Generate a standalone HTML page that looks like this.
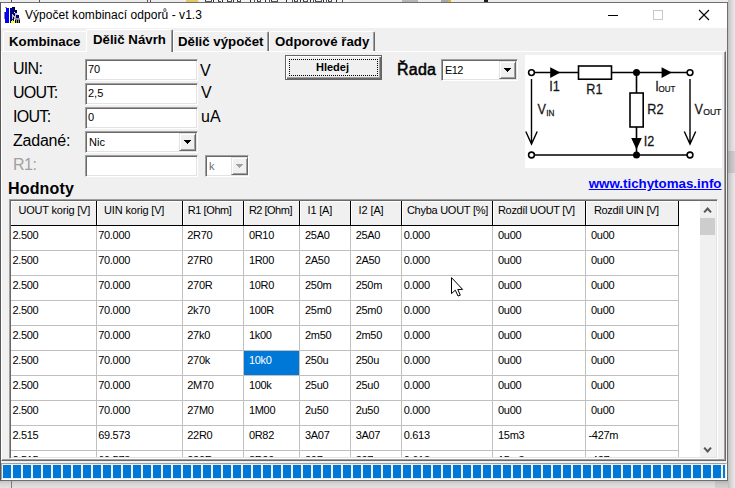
<!DOCTYPE html>
<html>
<head>
<meta charset="utf-8">
<style>
*{box-sizing:border-box;margin:0;padding:0}
html,body{width:735px;height:488px;overflow:hidden;background:#f0f0f0;font-family:"Liberation Sans",sans-serif;color:#000}
.a{position:absolute}
.t{position:absolute;white-space:nowrap}
#bgtop{left:0;top:0;width:735px;height:2px;background:#ececec}
#bgright{left:728px;top:0;width:7px;height:488px;background:linear-gradient(to right,#bdbdbd,#d6d6d6 45%,#e8e8e8)}
#bgbottom{left:0;top:481px;width:735px;height:7px;background:linear-gradient(to bottom,#c4c4c4,#d6d6d6 40%,#e2e2e2)}
#win{left:0;top:2px;width:728px;height:479px;background:#f0f0f0;border:1px solid #6e6e6e;border-left-color:#585858}
#title{left:1px;top:3px;width:726px;height:25px;background:#fff}
#ttext{left:25px;top:8px;font-size:12px;line-height:15px;letter-spacing:0.05px}
.tabtxt{font-weight:bold;font-size:13.25px;line-height:15px}
.lbl{font-size:16px;line-height:18px}
.inp{position:absolute;height:22px;background:#fff;border:1px solid;border-color:#a0a0a0 #fff #fff #a0a0a0;box-shadow:inset 1px 1px 0 #696969, inset -1px -1px 0 #e3e3e3}
.it{font-size:11px;line-height:13px}
.cbtn{position:absolute;width:17px;height:18px;background:#f0f0f0;border:1px solid;border-color:#e3e3e3 #696969 #696969 #e3e3e3;box-shadow:inset 1px 1px 0 #fff, inset -1px -1px 0 #a0a0a0}
.cbtn:after{content:"";position:absolute;left:4px;top:6px;width:7px;height:4px;background:linear-gradient(#000,#000) 0 0/7px 1px no-repeat,linear-gradient(#000,#000) 1px 1px/5px 1px no-repeat,linear-gradient(#000,#000) 2px 2px/3px 1px no-repeat,linear-gradient(#000,#000) 3px 3px/1px 1px no-repeat}
.cbtn.dis:after{background:linear-gradient(#a0a0a0,#a0a0a0) 0 0/7px 1px no-repeat,linear-gradient(#a0a0a0,#a0a0a0) 1px 1px/5px 1px no-repeat,linear-gradient(#a0a0a0,#a0a0a0) 2px 2px/3px 1px no-repeat,linear-gradient(#a0a0a0,#a0a0a0) 3px 3px/1px 1px no-repeat}
.hc{position:absolute;top:201px;height:25px;background:#f0f0f0;border-right:1px solid #000;border-bottom:1px solid #000;box-shadow:inset 1px 1px 0 #fff}
.ht{font-size:11px;line-height:13px;top:206px}
.ct{font-size:11px;line-height:13px}
.vl{position:absolute;width:1px;background:#c0c0c0}
.hl{position:absolute;height:1px;background:#c0c0c0}
</style>
</head>
<body>
<div class="a" id="bgtop"></div><div class="a" style="left:200px;top:0px;width:150px;height:2px;background:#f4f4f4"></div><div class="a" style="left:11px;top:0px;width:1px;height:2px;background:#505458"></div><div class="a" style="left:39px;top:0px;width:1px;height:2px;background:#505458"></div><div class="a" style="left:147px;top:0px;width:1px;height:2px;background:#505458"></div><div class="a" style="left:150px;top:0px;width:1px;height:2px;background:#505458"></div><div class="a" style="left:186px;top:0px;width:12px;height:2px;background:#e6c766"></div><div class="a" style="left:205px;top:0px;width:1px;height:2px;background:#2c2c3a"></div><div class="a" style="left:211px;top:0px;width:1px;height:2px;background:#4c4c5c"></div><div class="a" style="left:205px;top:1px;width:7px;height:1px;background:#55555f"></div><div class="a" style="left:213px;top:0px;width:1px;height:2px;background:#2c2c3a"></div><div class="a" style="left:218px;top:0px;width:1px;height:2px;background:#2c2c3a"></div><div class="a" style="left:218px;top:1px;width:3px;height:1px;background:#55555f"></div><div class="a" style="left:222px;top:0px;width:1px;height:2px;background:#2c2c3a"></div><div class="a" style="left:227px;top:0px;width:1px;height:2px;background:#2c2c3a"></div><div class="a" style="left:231px;top:0px;width:1px;height:2px;background:#4c4c5c"></div><div class="a" style="left:227px;top:1px;width:5px;height:1px;background:#55555f"></div><div class="a" style="left:233px;top:0px;width:1px;height:2px;background:#2c2c3a"></div><div class="a" style="left:237px;top:0px;width:1px;height:2px;background:#2c2c3a"></div><div class="a" style="left:240px;top:0px;width:1px;height:2px;background:#4c4c5c"></div><div class="a" style="left:237px;top:1px;width:4px;height:1px;background:#55555f"></div><div class="a" style="left:250px;top:0px;width:1px;height:2px;background:#2c2c3a"></div><div class="a" style="left:254px;top:0px;width:1px;height:2px;background:#4c4c5c"></div><div class="a" style="left:257px;top:0px;width:1px;height:2px;background:#2c2c3a"></div><div class="a" style="left:260px;top:0px;width:1px;height:2px;background:#4c4c5c"></div><div class="a" style="left:257px;top:1px;width:4px;height:1px;background:#55555f"></div><div class="a" style="left:265px;top:0px;width:1px;height:2px;background:#2c2c3a"></div><div class="a" style="left:269px;top:0px;width:1px;height:2px;background:#4c4c5c"></div><div class="a" style="left:271px;top:0px;width:1px;height:2px;background:#2c2c3a"></div><div class="a" style="left:277px;top:0px;width:1px;height:2px;background:#4c4c5c"></div><div class="a" style="left:271px;top:1px;width:7px;height:1px;background:#55555f"></div><div class="a" style="left:286px;top:0px;width:1px;height:2px;background:#2c2c3a"></div><div class="a" style="left:292px;top:0px;width:1px;height:2px;background:#4c4c5c"></div><div class="a" style="left:294px;top:0px;width:1px;height:2px;background:#2c2c3a"></div><div class="a" style="left:297px;top:0px;width:1px;height:2px;background:#4c4c5c"></div><div class="a" style="left:294px;top:1px;width:4px;height:1px;background:#55555f"></div><div class="a" style="left:300px;top:0px;width:1px;height:2px;background:#2c2c3a"></div><div class="a" style="left:303px;top:0px;width:1px;height:2px;background:#2c2c3a"></div><div class="a" style="left:307px;top:0px;width:1px;height:2px;background:#4c4c5c"></div><div class="a" style="left:303px;top:1px;width:5px;height:1px;background:#55555f"></div><div class="a" style="left:310px;top:0px;width:1px;height:2px;background:#2c2c3a"></div><div class="a" style="left:313px;top:0px;width:1px;height:2px;background:#4c4c5c"></div><div class="a" style="left:315px;top:0px;width:1px;height:2px;background:#2c2c3a"></div><div class="a" style="left:321px;top:0px;width:1px;height:2px;background:#4c4c5c"></div><div class="a" style="left:315px;top:1px;width:7px;height:1px;background:#55555f"></div><div class="a" style="left:323px;top:0px;width:1px;height:2px;background:#2c2c3a"></div><div class="a" style="left:326px;top:0px;width:1px;height:2px;background:#4c4c5c"></div><div class="a" style="left:328px;top:0px;width:1px;height:2px;background:#2c2c3a"></div><div class="a" style="left:331px;top:0px;width:1px;height:2px;background:#4c4c5c"></div><div class="a" style="left:328px;top:1px;width:4px;height:1px;background:#55555f"></div><div class="a" style="left:336px;top:0px;width:1px;height:2px;background:#2c2c3a"></div><div class="a" style="left:342px;top:0px;width:1px;height:2px;background:#4c4c5c"></div><div class="a" style="left:402px;top:0px;width:16px;height:2px;background:#b6b6b6"></div><div class="a" style="left:441px;top:0px;width:7px;height:2px;background:#a8a8a8"></div><div class="a" style="left:448px;top:0px;width:3px;height:2px;background:#e0b040"></div><div class="a" style="left:484px;top:0px;width:4px;height:2px;background:#181828"></div>
<div class="a" id="bgbottom"></div><div class="a" style="left:11px;top:481px;width:1px;height:7px;background:#7c7c7c"></div><div class="a" style="left:715px;top:481px;width:20px;height:7px;background:linear-gradient(to bottom,#b4b4b4,#c8c8c8 50%,#d0d0d0)"></div>
<div class="a" id="bgright"></div><div class="a" style="left:728px;top:151px;width:7px;height:22px;background:rgba(0,0,0,0.1)"></div>
<div class="a" id="win"></div>
<div class="a" id="title"></div>
<svg class="a" style="left:3px;top:5px" width="20" height="20" viewBox="3 5 20 20" shape-rendering="crispEdges"><rect x="6" y="8" width="3" height="4" fill="#0000ff"/><rect x="5" y="12" width="4" height="11" fill="#0000ff"/><rect x="4" y="12" width="1" height="7" fill="#808080"/><rect x="5" y="7" width="2" height="1" fill="#909090"/><rect x="10" y="8" width="4" height="15" fill="#000080"/><rect x="14" y="10" width="3" height="9" fill="#000080"/><rect x="17" y="15" width="2" height="3" fill="#000080"/><rect x="12" y="7" width="3" height="1" fill="#000"/><rect x="14" y="8" width="1" height="2" fill="#000"/><rect x="15" y="10" width="2" height="1" fill="#000"/><rect x="14" y="12" width="1" height="1" fill="#fff"/><rect x="12" y="14" width="1" height="5" fill="#c0c0c0"/><rect x="13" y="15" width="1" height="2" fill="#c0c0c0"/><rect x="14" y="16" width="1" height="2" fill="#c0c0c0"/><rect x="15" y="13" width="1" height="6" fill="#c0c0c0"/><rect x="16" y="13" width="1" height="2" fill="#d0d0d0"/><rect x="17" y="14" width="1" height="1" fill="#d0d0d0"/><rect x="14" y="18" width="6" height="1" fill="#a0a0a0"/><rect x="15" y="19" width="5" height="4" fill="#909090"/><rect x="15" y="19" width="1" height="4" fill="#000"/><rect x="17" y="19" width="1" height="4" fill="#000"/><rect x="19" y="19" width="1" height="4" fill="#000"/><rect x="15" y="19" width="5" height="1" fill="#808080"/><rect x="11" y="21" width="4" height="2" fill="#ffff00"/><rect x="12" y="20" width="1" height="1" fill="#ffff00"/></svg>
<div class="t" id="ttext">Výpočet kombinací odporů - v1.3</div>
<svg class="a" style="left:600px;top:3px" width="127" height="25" viewBox="0 0 127 25">
<rect x="8" y="12" width="10" height="1" fill="#000" shape-rendering="crispEdges"/>
<rect x="53.5" y="7.5" width="9" height="9" fill="none" stroke="#c8c8c8" stroke-width="1"/>
<path d="M99 7 L109 17 M109 7 L99 17" stroke="#000" stroke-width="1.1" fill="none"/>
</svg>
<div class="a" style="left:1px;top:51px;width:725px;height:410px;border:1px solid;border-color:#fff #696969 #696969 #fff;box-shadow:inset -1px -1px 0 #a0a0a0"></div>
<div class="a" style="left:3px;top:31px;width:87px;height:20px;background:#f0f0f0;border:1px solid;border-color:#fff #696969 #f0f0f0 #fff;border-bottom:0;box-shadow:inset -1px 0 0 #a0a0a0;border-radius:2px 2px 0 0"></div>
<div class="a" style="left:173px;top:31px;width:96px;height:20px;background:#f0f0f0;border:1px solid;border-color:#fff #696969 #f0f0f0 #fff;border-bottom:0;box-shadow:inset -1px 0 0 #a0a0a0;border-radius:2px 2px 0 0"></div>
<div class="a" style="left:269px;top:31px;width:106px;height:20px;background:#f0f0f0;border:1px solid;border-color:#fff #696969 #f0f0f0 #fff;border-bottom:0;box-shadow:inset -1px 0 0 #a0a0a0;border-radius:2px 2px 0 0"></div>
<div class="a" style="left:86px;top:29px;width:87px;height:23px;background:#f0f0f0;border:1px solid;border-color:#fff #696969 #f0f0f0 #fff;border-bottom:0;box-shadow:inset -1px 0 0 #a0a0a0;border-radius:2px 2px 0 0"></div>
<div class="t tabtxt" style="left:9px;top:34px">Kombinace</div>
<div class="t tabtxt" style="left:93px;top:32px">Dělič Návrh</div>
<div class="t tabtxt" style="left:178px;top:34px">Dělič výpočet</div>
<div class="t tabtxt" style="left:275px;top:34px">Odporové řady</div>
<div class="t lbl" style="left:13px;top:60px;color:#000;letter-spacing:-0.70px">UIN:</div>
<div class="t lbl" style="left:13px;top:84px;color:#000;letter-spacing:-0.70px">UOUT:</div>
<div class="t lbl" style="left:13px;top:108px;color:#000;letter-spacing:-0.70px">IOUT:</div>
<div class="t lbl" style="left:13px;top:132px;color:#000;letter-spacing:-0.23px">Zadané:</div>
<div class="t lbl" style="left:13px;top:156px;color:#a0a0a0;letter-spacing:-0.45px">R1:</div>
<div class="t lbl" style="left:200px;top:62px">V</div>
<div class="t lbl" style="left:201px;top:84px">V</div>
<div class="t lbl" style="left:201px;top:108px">uA</div>
<div class="inp" style="left:85px;top:59px;width:113px"></div><div class="t it" style="left:88px;top:63px">70</div>
<div class="inp" style="left:85px;top:83px;width:113px"></div><div class="t it" style="left:88px;top:87px">2,5</div>
<div class="inp" style="left:85px;top:107px;width:113px"></div><div class="t it" style="left:88px;top:111px">0</div>
<div class="inp" style="left:85px;top:131px;width:113px"></div><div class="t it" style="left:89px;top:136px">Nic</div><div class="cbtn" style="left:179px;top:133px"></div>
<div class="inp" style="left:85px;top:155px;width:113px"></div>
<div class="inp" style="left:205px;top:155px;width:44px"></div><div class="t it" style="left:209px;top:160px;color:#6d6d6d">k</div><div class="cbtn dis" style="left:231px;top:157px"></div>
<div class="a" style="left:285px;top:55px;width:97px;height:25px;background:#f0f0f0;border:1px solid #646464;box-shadow:inset 1px 1px 0 #fff,inset -1px -1px 0 #696969,inset -2px -2px 0 #a0a0a0"></div>
<div class="a" style="left:289px;top:59px;width:89px;height:17px;border:1px dotted #000"></div>
<div class="t" style="left:316px;top:61px;font-weight:bold;font-size:11px;line-height:13px">Hledej</div>
<div class="t lbl" style="left:397px;top:61px;letter-spacing:0.25px;-webkit-text-stroke:0.5px #000">Řada</div>
<div class="inp" style="left:441px;top:59px;width:77px"></div><div class="t it" style="left:445px;top:64px;letter-spacing:-0.6px">E12</div><div class="cbtn" style="left:499px;top:61px"></div>
<svg class="a" style="left:525px;top:55px" width="197" height="113" viewBox="525 55 197 113">
<rect x="525" y="55" width="197" height="113" fill="#fff"/>
<g stroke="#000" stroke-width="1.6" fill="none">
<path d="M534 72.5 H578.5 M611.5 72.5 H687.5 M534 155 H687.5 M636.5 72.5 V93 M636.5 127 V155"/>
<rect x="578.5" y="66" width="33" height="13.2" fill="#fff"/>
<rect x="630" y="93" width="13.2" height="34" fill="#fff"/>
<circle cx="531.5" cy="72.6" r="2.9" fill="#fff"/><circle cx="690" cy="72.6" r="2.9" fill="#fff"/>
<circle cx="531.5" cy="155" r="2.9" fill="#fff"/><circle cx="690" cy="155" r="2.9" fill="#fff"/>
<path d="M531.5 79 V143 M525.8 131.5 L531.5 144 L537.2 131.5" stroke-width="1.4"/>
<path d="M690 79 V143 M684.3 131.5 L690 144 L695.7 131.5" stroke-width="1.4"/>
</g>
<circle cx="636.5" cy="72.6" r="3.5" fill="#000"/><circle cx="636.5" cy="155" r="3.5" fill="#000"/>
<path d="M550.2 67.2 L560.4 72.6 L550.2 78 Z M661.6 67.2 L671.8 72.6 L661.6 78 Z M631.2 138 L641.8 138 L636.5 149.5 Z" fill="#000"/>
<g font-family="Liberation Sans, sans-serif" fill="#151515" stroke="#151515" stroke-width="0.25">
<text transform="translate(549.3 91.2) scale(0.92 1)" font-size="13.8">I1</text><text transform="translate(586.3 94.4) scale(0.92 1)" font-size="13.8">R1</text><text transform="translate(647.3 113.6) scale(0.92 1)" font-size="13.8">R2</text><text transform="translate(643.8 146.2) scale(0.92 1)" font-size="13.8">I2</text><text transform="translate(655.2 90.6) scale(0.92 1)" font-size="13.8">I</text><text transform="translate(658.6 92.2) scale(0.93 1)" font-size="8.6">OUT</text><text transform="translate(537.6 114.3) scale(0.92 1)" font-size="13.8">V</text><text transform="translate(546.2 116.2) scale(0.95 1)" font-size="8.6">IN</text><text transform="translate(694.4 113.5) scale(0.92 1)" font-size="13.8">V</text><text transform="translate(703.2 114.8) scale(0.98 1)" font-size="8.8">OUT</text>
</g>
</svg>
<div class="t" style="left:8px;top:180px;font-weight:bold;font-size:16px;line-height:18px;letter-spacing:0.15px">Hodnoty</div>
<div class="t" style="right:13.5px;top:176px;font-weight:bold;font-size:13.33px;line-height:15px;color:#0000ff;text-decoration:underline">www.tichytomas.info</div>
<div class="a" style="left:9px;top:199px;width:709px;height:260px;background:#fff;border:1px solid;border-color:#a0a0a0 #fff #fff #a0a0a0;box-shadow:inset 1px 1px 0 #696969,inset -1px -1px 0 #e3e3e3"></div>
<div class="a" id="gridclip" style="left:11px;top:201px;width:705px;height:256px;overflow:hidden">
<div class="hc" style="left:0px;top:0;width:86px"></div><div class="t ht" style="left:7.4px;top:3px;letter-spacing:-0.19px">UOUT korig [V]</div>
<div class="hc" style="left:86px;top:0;width:86px"></div><div class="t ht" style="left:93.1px;top:3px;letter-spacing:-0.17px">UIN korig [V]</div>
<div class="hc" style="left:172px;top:0;width:61px"></div><div class="t ht" style="left:176.8px;top:3px;letter-spacing:-0.43px">R1 [Ohm]</div>
<div class="hc" style="left:233px;top:0;width:56px"></div><div class="t ht" style="left:237.9px;top:3px;letter-spacing:-0.50px">R2 [Ohm]</div>
<div class="hc" style="left:289px;top:0;width:51px"></div><div class="t ht" style="left:296.5px;top:3px;letter-spacing:-0.18px">I1 [A]</div>
<div class="hc" style="left:340px;top:0;width:51px"></div><div class="t ht" style="left:347.6px;top:3px;letter-spacing:-0.12px">I2 [A]</div>
<div class="hc" style="left:391px;top:0;width:91px"></div><div class="t ht" style="left:395.9px;top:3px;letter-spacing:-0.26px">Chyba UOUT [%]</div>
<div class="hc" style="left:482px;top:0;width:93px"></div><div class="t ht" style="left:487.0px;top:3px;letter-spacing:-0.34px">Rozdíl UOUT [V]</div>
<div class="hc" style="left:575px;top:0;width:93px"></div><div class="t ht" style="left:583.0px;top:3px;letter-spacing:-0.35px">Rozdíl UIN [V]</div>
<div class="vl" style="left:85px;top:25px;height:240px"></div><div class="vl" style="left:171px;top:25px;height:240px"></div><div class="vl" style="left:232px;top:25px;height:240px"></div><div class="vl" style="left:288px;top:25px;height:240px"></div><div class="vl" style="left:339px;top:25px;height:240px"></div><div class="vl" style="left:390px;top:25px;height:240px"></div><div class="vl" style="left:481px;top:25px;height:240px"></div><div class="vl" style="left:574px;top:25px;height:240px"></div><div class="vl" style="left:667px;top:25px;height:240px"></div><div class="hl" style="left:0;top:49px;width:668px"></div><div class="hl" style="left:0;top:74px;width:668px"></div><div class="hl" style="left:0;top:99px;width:668px"></div><div class="hl" style="left:0;top:124px;width:668px"></div><div class="hl" style="left:0;top:149px;width:668px"></div><div class="hl" style="left:0;top:174px;width:668px"></div><div class="hl" style="left:0;top:199px;width:668px"></div><div class="hl" style="left:0;top:224px;width:668px"></div><div class="hl" style="left:0;top:249px;width:668px"></div><div class="hl" style="left:0;top:274px;width:668px"></div>
<div class="a" style="left:233px;top:150px;width:55px;height:24px;background:#0078d7"></div>
<div class="t ct" style="left:1.4px;top:28px;color:#000;letter-spacing:-0.30px">2.500</div><div class="t ct" style="left:87.2px;top:28px;color:#000;letter-spacing:-0.30px">70.000</div><div class="t ct" style="left:176.3px;top:28px;color:#000;letter-spacing:-0.30px">2R70</div><div class="t ct" style="left:237.9px;top:28px;color:#000;letter-spacing:-0.30px">0R10</div><div class="t ct" style="left:294.0px;top:28px;color:#000;letter-spacing:-0.30px">25A0</div><div class="t ct" style="left:344.7px;top:28px;color:#000;letter-spacing:-0.30px">25A0</div><div class="t ct" style="left:392.7px;top:28px;color:#000;letter-spacing:-0.30px">0.000</div><div class="t ct" style="left:487.0px;top:28px;color:#000;letter-spacing:-0.30px">0u00</div><div class="t ct" style="left:580.0px;top:28px;color:#000;letter-spacing:-0.30px">0u00</div>
<div class="t ct" style="left:1.4px;top:53px;color:#000;letter-spacing:-0.30px">2.500</div><div class="t ct" style="left:87.2px;top:53px;color:#000;letter-spacing:-0.30px">70.000</div><div class="t ct" style="left:176.3px;top:53px;color:#000;letter-spacing:-0.30px">27R0</div><div class="t ct" style="left:237.9px;top:53px;color:#000;letter-spacing:-0.30px">1R00</div><div class="t ct" style="left:294.0px;top:53px;color:#000;letter-spacing:-0.30px">2A50</div><div class="t ct" style="left:344.7px;top:53px;color:#000;letter-spacing:-0.30px">2A50</div><div class="t ct" style="left:392.7px;top:53px;color:#000;letter-spacing:-0.30px">0.000</div><div class="t ct" style="left:487.0px;top:53px;color:#000;letter-spacing:-0.30px">0u00</div><div class="t ct" style="left:580.0px;top:53px;color:#000;letter-spacing:-0.30px">0u00</div>
<div class="t ct" style="left:1.4px;top:78px;color:#000;letter-spacing:-0.30px">2.500</div><div class="t ct" style="left:87.2px;top:78px;color:#000;letter-spacing:-0.30px">70.000</div><div class="t ct" style="left:176.3px;top:78px;color:#000;letter-spacing:-0.30px">270R</div><div class="t ct" style="left:237.9px;top:78px;color:#000;letter-spacing:-0.30px">10R0</div><div class="t ct" style="left:294.0px;top:78px;color:#000;letter-spacing:-0.30px">250m</div><div class="t ct" style="left:344.7px;top:78px;color:#000;letter-spacing:-0.30px">250m</div><div class="t ct" style="left:392.7px;top:78px;color:#000;letter-spacing:-0.30px">0.000</div><div class="t ct" style="left:487.0px;top:78px;color:#000;letter-spacing:-0.30px">0u00</div><div class="t ct" style="left:580.0px;top:78px;color:#000;letter-spacing:-0.30px">0u00</div>
<div class="t ct" style="left:1.4px;top:103px;color:#000;letter-spacing:-0.30px">2.500</div><div class="t ct" style="left:87.2px;top:103px;color:#000;letter-spacing:-0.30px">70.000</div><div class="t ct" style="left:176.3px;top:103px;color:#000;letter-spacing:-0.30px">2k70</div><div class="t ct" style="left:237.9px;top:103px;color:#000;letter-spacing:-0.30px">100R</div><div class="t ct" style="left:294.0px;top:103px;color:#000;letter-spacing:-0.30px">25m0</div><div class="t ct" style="left:344.7px;top:103px;color:#000;letter-spacing:-0.30px">25m0</div><div class="t ct" style="left:392.7px;top:103px;color:#000;letter-spacing:-0.30px">0.000</div><div class="t ct" style="left:487.0px;top:103px;color:#000;letter-spacing:-0.30px">0u00</div><div class="t ct" style="left:580.0px;top:103px;color:#000;letter-spacing:-0.30px">0u00</div>
<div class="t ct" style="left:1.4px;top:128px;color:#000;letter-spacing:-0.30px">2.500</div><div class="t ct" style="left:87.2px;top:128px;color:#000;letter-spacing:-0.30px">70.000</div><div class="t ct" style="left:176.3px;top:128px;color:#000;letter-spacing:-0.30px">27k0</div><div class="t ct" style="left:237.9px;top:128px;color:#000;letter-spacing:-0.30px">1k00</div><div class="t ct" style="left:294.0px;top:128px;color:#000;letter-spacing:-0.30px">2m50</div><div class="t ct" style="left:344.7px;top:128px;color:#000;letter-spacing:-0.30px">2m50</div><div class="t ct" style="left:392.7px;top:128px;color:#000;letter-spacing:-0.30px">0.000</div><div class="t ct" style="left:487.0px;top:128px;color:#000;letter-spacing:-0.30px">0u00</div><div class="t ct" style="left:580.0px;top:128px;color:#000;letter-spacing:-0.30px">0u00</div>
<div class="t ct" style="left:1.4px;top:153px;color:#000;letter-spacing:-0.30px">2.500</div><div class="t ct" style="left:87.2px;top:153px;color:#000;letter-spacing:-0.30px">70.000</div><div class="t ct" style="left:176.3px;top:153px;color:#000;letter-spacing:-0.30px">270k</div><div class="t ct" style="left:237.9px;top:153px;color:#fff;letter-spacing:-0.30px">10k0</div><div class="t ct" style="left:294.0px;top:153px;color:#000;letter-spacing:-0.30px">250u</div><div class="t ct" style="left:344.7px;top:153px;color:#000;letter-spacing:-0.30px">250u</div><div class="t ct" style="left:392.7px;top:153px;color:#000;letter-spacing:-0.30px">0.000</div><div class="t ct" style="left:487.0px;top:153px;color:#000;letter-spacing:-0.30px">0u00</div><div class="t ct" style="left:580.0px;top:153px;color:#000;letter-spacing:-0.30px">0u00</div>
<div class="t ct" style="left:1.4px;top:178px;color:#000;letter-spacing:-0.30px">2.500</div><div class="t ct" style="left:87.2px;top:178px;color:#000;letter-spacing:-0.30px">70.000</div><div class="t ct" style="left:176.3px;top:178px;color:#000;letter-spacing:-0.30px">2M70</div><div class="t ct" style="left:237.9px;top:178px;color:#000;letter-spacing:-0.30px">100k</div><div class="t ct" style="left:294.0px;top:178px;color:#000;letter-spacing:-0.30px">25u0</div><div class="t ct" style="left:344.7px;top:178px;color:#000;letter-spacing:-0.30px">25u0</div><div class="t ct" style="left:392.7px;top:178px;color:#000;letter-spacing:-0.30px">0.000</div><div class="t ct" style="left:487.0px;top:178px;color:#000;letter-spacing:-0.30px">0u00</div><div class="t ct" style="left:580.0px;top:178px;color:#000;letter-spacing:-0.30px">0u00</div>
<div class="t ct" style="left:1.4px;top:203px;color:#000;letter-spacing:-0.30px">2.500</div><div class="t ct" style="left:87.2px;top:203px;color:#000;letter-spacing:-0.30px">70.000</div><div class="t ct" style="left:176.3px;top:203px;color:#000;letter-spacing:-0.30px">27M0</div><div class="t ct" style="left:237.9px;top:203px;color:#000;letter-spacing:-0.30px">1M00</div><div class="t ct" style="left:294.0px;top:203px;color:#000;letter-spacing:-0.30px">2u50</div><div class="t ct" style="left:344.7px;top:203px;color:#000;letter-spacing:-0.30px">2u50</div><div class="t ct" style="left:392.7px;top:203px;color:#000;letter-spacing:-0.30px">0.000</div><div class="t ct" style="left:487.0px;top:203px;color:#000;letter-spacing:-0.30px">0u00</div><div class="t ct" style="left:580.0px;top:203px;color:#000;letter-spacing:-0.30px">0u00</div>
<div class="t ct" style="left:1.4px;top:228px;color:#000;letter-spacing:-0.30px">2.515</div><div class="t ct" style="left:87.2px;top:228px;color:#000;letter-spacing:-0.30px">69.573</div><div class="t ct" style="left:176.3px;top:228px;color:#000;letter-spacing:-0.30px">22R0</div><div class="t ct" style="left:237.9px;top:228px;color:#000;letter-spacing:-0.30px">0R82</div><div class="t ct" style="left:294.0px;top:228px;color:#000;letter-spacing:-0.30px">3A07</div><div class="t ct" style="left:344.7px;top:228px;color:#000;letter-spacing:-0.30px">3A07</div><div class="t ct" style="left:392.7px;top:228px;color:#000;letter-spacing:-0.30px">0.613</div><div class="t ct" style="left:487.0px;top:228px;color:#000;letter-spacing:-0.30px">15m3</div><div class="t ct" style="left:577.5px;top:228px;color:#000;letter-spacing:-0.30px">-427m</div>
<div class="t ct" style="left:1.4px;top:253px;color:#000;letter-spacing:-0.30px">2.515</div><div class="t ct" style="left:87.2px;top:253px;color:#000;letter-spacing:-0.30px">69.573</div><div class="t ct" style="left:176.3px;top:253px;color:#000;letter-spacing:-0.30px">220R</div><div class="t ct" style="left:237.9px;top:253px;color:#000;letter-spacing:-0.30px">8R20</div><div class="t ct" style="left:294.0px;top:253px;color:#000;letter-spacing:-0.30px">307m</div><div class="t ct" style="left:344.7px;top:253px;color:#000;letter-spacing:-0.30px">307m</div><div class="t ct" style="left:392.7px;top:253px;color:#000;letter-spacing:-0.30px">0.613</div><div class="t ct" style="left:487.0px;top:253px;color:#000;letter-spacing:-0.30px">15m3</div><div class="t ct" style="left:577.5px;top:253px;color:#000;letter-spacing:-0.30px">-427m</div>
<div class="a" style="left:689px;top:0;width:17px;height:256px;background:#f0f0f0"></div><div class="a" style="left:689px;top:17px;width:15px;height:17px;background:#cdcdcd"></div><svg class="a" style="left:689px;top:0" width="17" height="256" viewBox="0 0 17 256"><path d="M4.2 11.3 L7.6 7.5 L11 11.3" stroke="#555" stroke-width="2" fill="none"/><path d="M4.2 246.6 L7.6 250.4 L11 246.6" stroke="#555" stroke-width="2" fill="none"/></svg>
</div>
<div class="a" style="left:1px;top:463px;width:726px;height:17px;background:#f0f0f0;border:1px solid;border-color:#a0a0a0 #fff #fff #a0a0a0"></div>
<div class="a" style="left:3px;top:465px;width:722px;height:13px;background:repeating-linear-gradient(to right,#0078d7 0,#0078d7 8px,#f0f0f0 8px,#f0f0f0 10px)"></div>
<svg class="a" style="left:448px;top:274px" width="18" height="25" viewBox="448 274 18 25"><path d="M451.5 277.6 L451.5 293.6 L455.3 290.2 L458 296 L460.3 295.2 L457.8 289.5 L462.6 289.4 Z" fill="#fff" stroke="#000" stroke-width="1" stroke-linejoin="miter"/></svg>
</body>
</html>
